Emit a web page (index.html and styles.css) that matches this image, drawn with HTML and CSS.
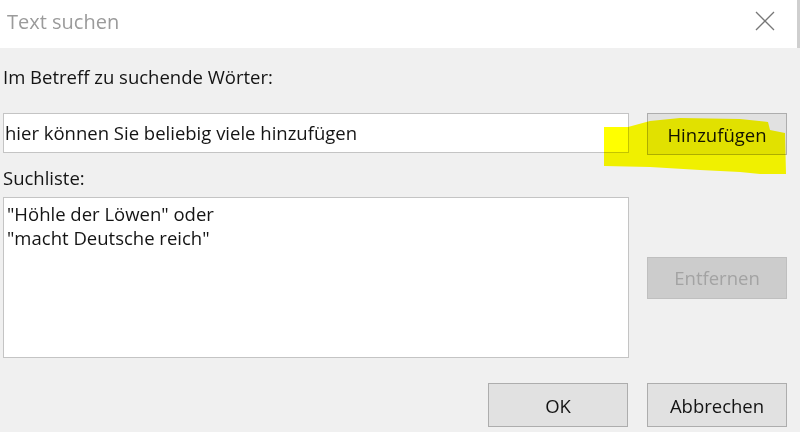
FILE: index.html
```html
<!DOCTYPE html>
<html lang="de">

<head>
    <meta charset="UTF-8">
    <title>Text suchen</title>
    <link rel="stylesheet" href="styles.css">
</head>

<body>

    <div class="dialog">
        <!-- Title bar -->
        <div class="titlebar">
            <span class="title">Text suchen</span>
            <span class="close">
                <svg width="20" height="20" viewBox="0 0 20 20">
                    <path d="M1 1 L19 19 M19 1 L1 19" stroke="#777" stroke-width="1.3" fill="none" />
                </svg>
            </span>
        </div>

        <!-- Main content -->
        <div class="content">
            <div class="field-label first">Im Betreff zu suchende Wörter:</div>
            <div class="row">
                <div class="text-input">hier können Sie beliebig viele hinzufügen</div>
                <button class="btn btn-add">Hinzufügen</button>
            </div>

            <div class="field-label">Suchliste:</div>
            <div class="row row-list">
                <div class="listbox">
                    <div class="item">"Höhle der Löwen" oder</div>
                    <div class="item">"macht Deutsche reich"</div>
                </div>
                <button class="btn btn-disabled" disabled>Entfernen</button>
            </div>

            <div class="footer">
                <button class="btn">OK</button>
                <button class="btn">Abbrechen</button>
            </div>
        </div>

        <!-- Yellow highlighter stroke -->
        <svg class="marker" width="190" height="62" viewBox="0 0 190 62">
            <polygon points="4,12 28,12 50,6 80,3 140,4 168,7 170,15 185,18 186,59 160,59 140,57 100,55 50,52 4,51" fill="#ffff00" />
        </svg>
    </div>

</body>

</html>
```

FILE: styles.css
```css
body {
    margin: 0;
    font-family: 'Open Sans', 'Noto Sans', sans-serif;
    color: #141414;
}

.dialog {
    position: relative;
    width: 800px;
    height: 432px;
    background-color: #f0f0f0;
    overflow: hidden;
}

/* Title bar */
.titlebar {
    height: 48px;
    background-color: white;
    display: flex;
    align-items: center;
    justify-content: space-between;
    border-right: 3px solid #cfcfcf;
    box-sizing: border-box;
}

.title {
    font-size: 20px;
    color: #9b9b9b;
    padding-left: 7px;
    margin-top: -6px;
}

.close {
    display: flex;
    margin-right: 22px;
    margin-top: -6px;
}

/* Content */
.content {
    padding-left: 3px;
    width: 784px;
}

.field-label {
    font-size: 18.5px;
    line-height: 20px;
    margin-top: 13px;
}

.field-label.first {
    margin-top: 19px;
    margin-bottom: 26px;
}

.row {
    display: flex;
    align-items: flex-start;
    gap: 18px;
}

.text-input {
    width: 626px;
    height: 40px;
    box-sizing: border-box;
    background-color: white;
    border: 1px solid #c4c4c4;
    font-size: 18.5px;
    line-height: 38px;
    padding-left: 1px;
}

.btn {
    width: 140px;
    height: 44px;
    box-sizing: border-box;
    background-color: #e1e1e1;
    border: 1px solid #adadad;
    font-family: inherit;
    font-size: 18.5px;
    color: #141414;
    padding: 0;
}

.btn-add {
    height: 42px;
}

.row-list {
    margin-top: 9px;
    align-items: center;
}

.listbox {
    width: 626px;
    height: 161px;
    box-sizing: border-box;
    background-color: white;
    border: 1px solid #c4c4c4;
    padding: 4px 0 0 3px;
}

.item {
    font-size: 18.5px;
    line-height: 24px;
}

.btn-disabled {
    height: 42px;
    background-color: #cccccc;
    border-color: #bfbfbf;
    color: #a3a3a3;
}

.footer {
    display: flex;
    justify-content: flex-end;
    gap: 19px;
    margin-top: 25px;
}

/* Highlighter overlay */
.marker {
    position: absolute;
    left: 600px;
    top: 115px;
    mix-blend-mode: multiply;
}
```
